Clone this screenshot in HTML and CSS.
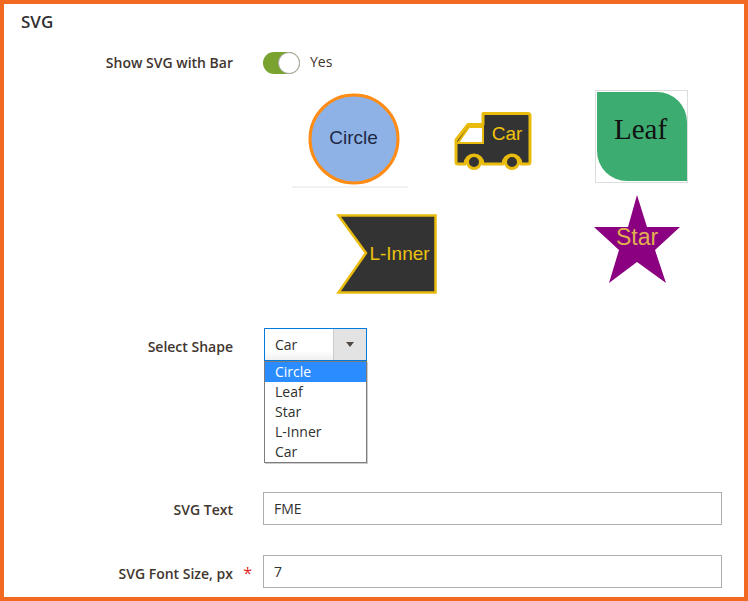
FILE: index.html
```html
<!DOCTYPE html>
<html lang="en">
<head>
  <meta charset="UTF-8">
  <meta name="viewport" content="width=device-width, initial-scale=1.0">
  <title>SVG</title>
  <link rel="stylesheet" href="styles.css">
</head>
<body>
  <div class="panel">
    <h2 class="panel-title">SVG</h2>

    <div class="field field-toggle">
      <label class="field-label">Show SVG with Bar</label>
      <div class="toggle-wrap">
        <span class="toggle"><span class="toggle-knob"></span></span>
        <span class="toggle-text">Yes</span>
      </div>
    </div>

    <svg class="shapes" width="400" height="215" viewBox="290 85 400 215">
      <rect x="292" y="186" width="116" height="2" fill="#f1f1f1"/>
      <circle cx="354" cy="139" r="44" fill="#8fb2e6" stroke="#ff8c14" stroke-width="3"/>
      <text class="shape-sans" x="353.500" y="144" font-size="19" fill="#1d2845" text-anchor="middle">Circle</text>

      <path d="M483 113.500H528Q530 113.500 530 115.500V162Q530 164 528 164H521A9 9 0 0 0 503 164H483A9 9 0 0 0 465 164H458Q456 164 456 162V140L468 124.500H483Z" fill="#333" stroke="#e8bb0c" stroke-width="3" stroke-linejoin="round"/>
      <path d="M469 127H483V143H458Z" fill="#fff" stroke="#e8bb0c" stroke-width="2"/>
      <circle cx="474" cy="162" r="6.500" fill="#333" stroke="#e8bb0c" stroke-width="3"/>
      <circle cx="512" cy="162" r="6.500" fill="#333" stroke="#e8bb0c" stroke-width="3"/>
      <text class="shape-sans" x="507" y="140" font-size="19" fill="#f0c20c" text-anchor="middle">Car</text>

      <rect x="595.500" y="90.500" width="92" height="92" fill="#fff" stroke="#ddd"/>
      <path d="M597 92H657A30 30 0 0 1 687 122V181H627A30 30 0 0 1 597 151Z" fill="#3cac70"/>
      <text class="shape-serif" x="640.500" y="139" font-size="29" fill="#111" text-anchor="middle">Leaf</text>

      <path d="M338.500 215.500H435.500V292.500H338.500L366 253Z" fill="#333" stroke="#e8bb0c" stroke-width="2.500"/>
      <text class="shape-sans" x="399.500" y="260" font-size="19" fill="#ecc20c" text-anchor="middle">L-Inner</text>

      <path d="M637 195L647 227H680L655 250L666 283L637 262L609 283L619 250L594 227H628Z" fill="#8b0080"/>
      <text class="shape-sans" x="637" y="245" font-size="23" fill="#e0b050" text-anchor="middle">Star</text>
    </svg>

    <div class="field field-select">
      <label class="field-label">Select Shape</label>
      <div class="select">
        <div class="select-value">Car</div>
        <div class="select-button"><span class="select-arrow"></span></div>
        <ul class="select-list">
          <li class="select-option is-active">Circle</li>
          <li class="select-option">Leaf</li>
          <li class="select-option">Star</li>
          <li class="select-option">L-Inner</li>
          <li class="select-option">Car</li>
        </ul>
      </div>
    </div>

    <div class="field field-text">
      <label class="field-label">SVG Text</label>
      <div class="input">FME</div>
    </div>

    <div class="field field-size">
      <label class="field-label is-required">SVG Font Size, px</label>
      <div class="input">7</div>
    </div>
  </div>
</body>
</html>
```

FILE: styles.css
```css
* {
  box-sizing: border-box;
  margin: 0;
  padding: 0;
}

html, body {
  height: 100%;
  overflow: hidden;
}

body {
  background: #ffffff;
  color: #41362f;
  font-family: 'Open Sans', sans-serif;
  font-size: 14px;
}

.panel {
  height: 601px;
  border: 4px solid #f26a21;
  padding: 7px 22px 0 0;
  background: #ffffff;
  overflow: hidden;
}

.panel-title {
  font-size: 17px;
  font-weight: 600;
  line-height: 22px;
  margin-left: 17px;
  color: #303030;
}

.field {
  display: grid;
  grid-template-columns: 229px 1fr;
  column-gap: 30px;
  align-items: center;
}

.field-label {
  position: relative;
  text-align: right;
  font-weight: 600;
  color: #41362f;
  line-height: 20px;
}

.field-select .field-label,
.field-size .field-label {
  padding-top: 4px;
}

.field-text .field-label {
  padding-top: 2px;
}

.is-required::after {
  content: "*";
  position: absolute;
  right: -19px;
  top: 3px;
  color: #e22626;
  font-size: 16px;
  font-weight: 400;
}

.field-toggle {
  margin-top: 19px;
}

.toggle-wrap {
  display: flex;
  align-items: center;
  gap: 10px;
}

.toggle {
  display: flex;
  justify-content: flex-end;
  width: 37px;
  height: 22px;
  border-radius: 11px;
  background: #79a22e;
}

.toggle-knob {
  width: 22px;
  height: 22px;
  border: 1px solid #adadad;
  border-radius: 50%;
  background: #ffffff;
}

.toggle-text {
  color: #41362f;
  line-height: 20px;
  margin-top: -2px;
}

.shapes {
  display: block;
  margin: 11px 0 0 286px;
}

.field-select {
  margin-top: 28px;
}

.select {
  position: relative;
  display: flex;
  width: 103px;
  height: 33px;
  margin-left: 1px;
  border: 1px solid #007bdb;
}

.select-value {
  flex: 1;
  padding-left: 10px;
  line-height: 31px;
  color: #303030;
  background: linear-gradient(to bottom, #ffffff 70%, #f0f0f0 100%);
}

.select-button {
  display: flex;
  align-items: center;
  justify-content: center;
  width: 33px;
  background: #e3e3e3;
  border-left: 1px solid #cccccc;
}

.select-arrow {
  width: 0;
  height: 0;
  border-left: 4px solid transparent;
  border-right: 4px solid transparent;
  border-top: 5px solid #514943;
}

.select-list {
  position: absolute;
  top: 32px;
  left: -1px;
  width: 103px;
  border: 1px solid #7d7d7d;
  background: #ffffff;
  list-style: none;
  box-shadow: 1px 1px 0 #cccccc;
}

.select-option {
  height: 20px;
  padding-left: 10px;
  line-height: 20px;
  color: #303030;
}

.is-active {
  background: #2a8cff;
  color: #ffffff;
}

.input {
  height: 33px;
  border: 1px solid #adadad;
  padding-left: 10px;
  line-height: 31px;
  color: #303030;
  background: #ffffff;
}

.field-text {
  margin-top: 131px;
}

.field-size {
  margin-top: 30px;
}

.shape-sans {
  font-family: 'Liberation Sans', sans-serif;
}

.shape-serif {
  font-family: 'Liberation Serif', serif;
}
```
